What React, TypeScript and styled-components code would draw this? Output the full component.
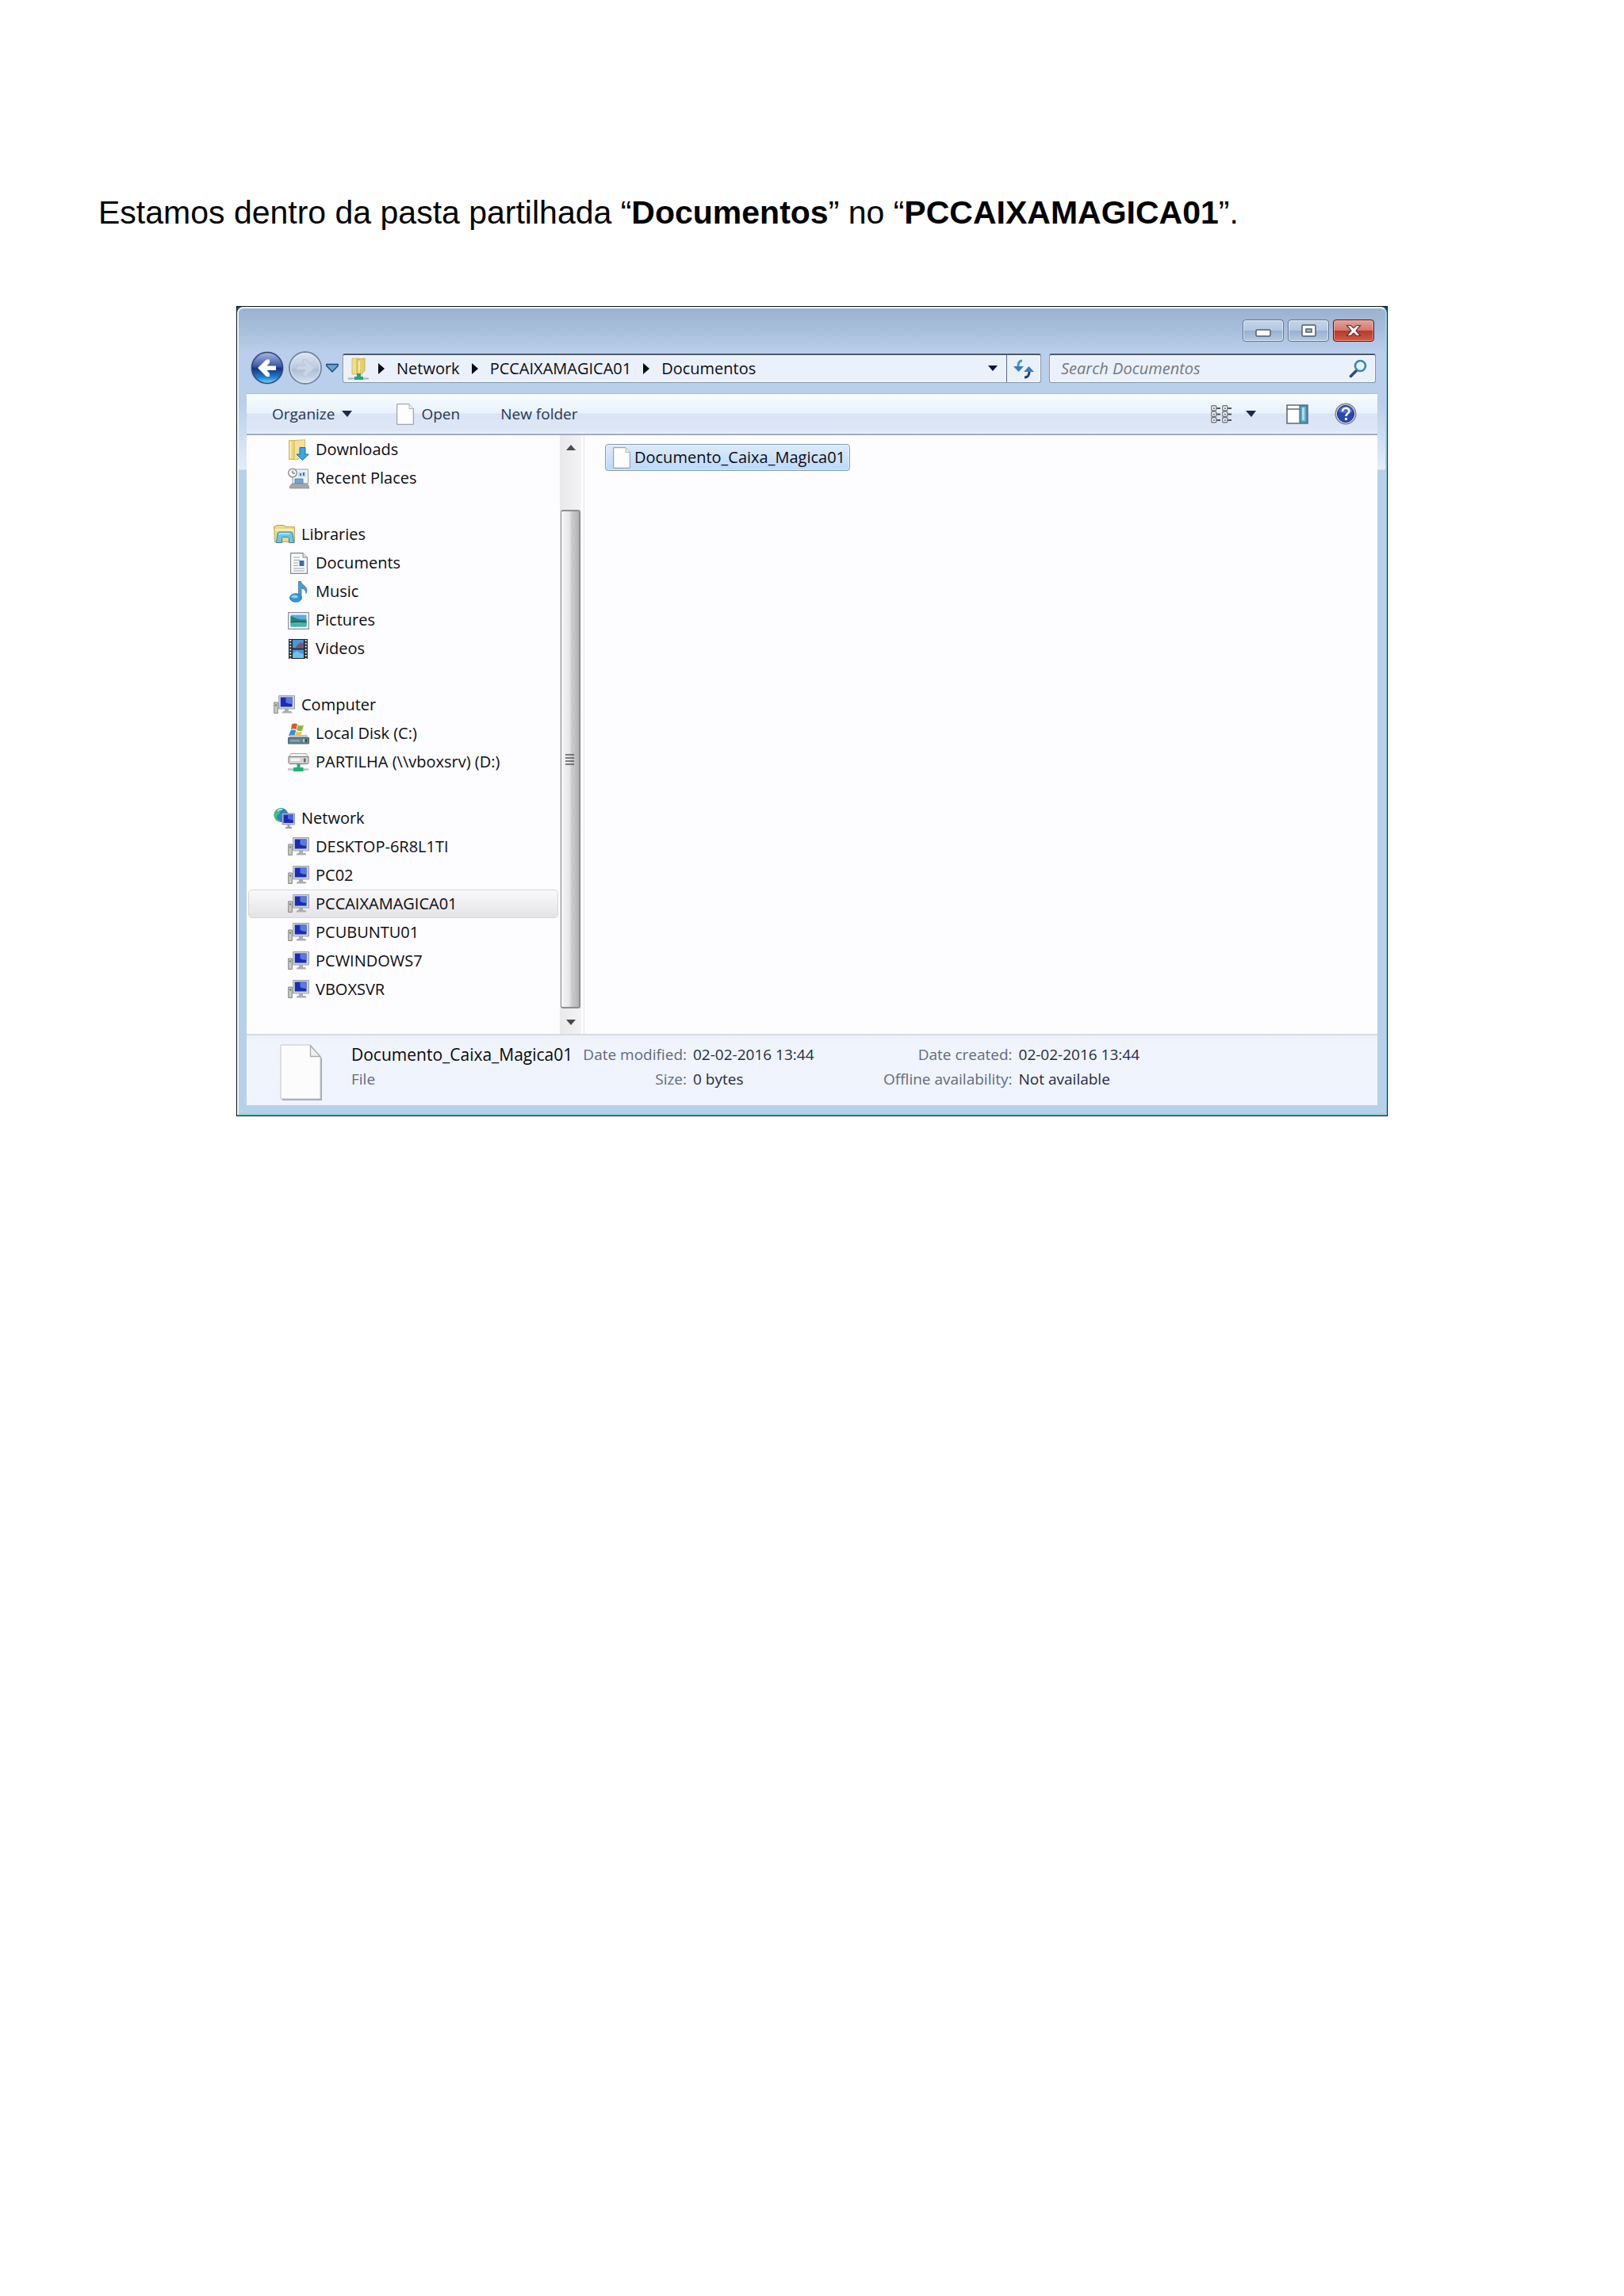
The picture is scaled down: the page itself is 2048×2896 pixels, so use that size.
import React from "react";
import styled, { createGlobalStyle } from "styled-components";

const GlobalStyle = createGlobalStyle`
  *, *::before, *::after { box-sizing: border-box; }
  body { margin: 0; background: #fff; }
  button, input { font: inherit; color: inherit; }
  button { margin: 0; padding: 0; border: 0; background: none; cursor: pointer; }
  ul, dl, dd, p { margin: 0; padding: 0; list-style: none; }
  a { color: inherit; text-decoration: none; }
  svg { display: block; flex: none; }
`;

/* ---------- document page ---------- */

const Page = styled.main`
  min-height: 100vh;
  padding: 244px 124px 124px;
  background: #fff;
`;

const Lead = styled.p`
  font: 41px/48px "Liberation Sans", Arial, sans-serif;
  color: #000;
`;

/* ---------- window chrome ---------- */

const Window = styled.section`
  max-width: 1452px;
  margin: 94px auto 0;
  border: 1px solid #0b1216;
  background: #0b4f92;
  font: 20px/28px "Open Sans", "Noto Sans", sans-serif;
  color: #0c0c14;
`;

const Frame = styled.div`
  padding: 0 0 11px;
  border: 2px solid;
  border-color: #fbfdff #9ad9f8 #7fc3c6 #f4f8fc;
  border-radius: 8px 8px 0 0;
  background: linear-gradient(
    #9ab2d0 0,
    #a3bad8 18px,
    #b9cfeb 56px,
    #b9cfeb 120px,
    #e2eefa 203px,
    #b8d1ea 204px
  );
`;

const Header = styled.header`
  padding: 14px 12px 10px 14px;
`;

const Caption = styled.div`
  display: flex;
  justify-content: flex-end;
  gap: 5px;
  padding-right: 2px;
  margin-bottom: 11px;
`;

const CaptionButton = styled.button<{ $close?: boolean }>`
  display: grid;
  place-items: center;
  width: 52px;
  height: 28px;
  border: 1px solid ${(p) => (p.$close ? "#4a1018" : "#5d7596")};
  border-radius: 4px;
  box-shadow: inset 0 0 0 1px
    ${(p) => (p.$close ? "rgba(255,200,190,.6)" : "rgba(255,255,255,.6)")};
  background: ${(p) =>
    p.$close
      ? "linear-gradient(#e3a398 0, #d27a6c 48%, #b8382a 50%, #cf5c46 100%)"
      : "linear-gradient(#c3d5ea 0, #b4c8e0 48%, #98b0cd 50%, #b3cae6 100%)"};
`;

const NavRow = styled.div`
  display: flex;
  align-items: center;
  height: 44px;
`;

const History = styled.div`
  display: flex;
  align-items: center;
  gap: 4px;
  margin-right: 5px;
`;

const BarBox = styled.div`
  display: flex;
  align-items: center;
  height: 37px;
  border: 1px solid #8496ad;
  border-top: 2px solid #4b5766;
  border-radius: 3px;
  background: #eaf1fa;
  box-shadow: inset 0 0 0 1px #f8fbfe;
`;

const Address = styled(BarBox)`
  flex: 1;
  min-width: 0;
  padding-left: 5px;
`;

const Crumbs = styled.nav`
  display: flex;
  flex: 1;
  align-items: center;
  gap: 15px;
  min-width: 0;
  padding-left: 12px;
  white-space: nowrap;
`;

const DropButton = styled.button`
  display: grid;
  place-items: center;
  width: 34px;
  height: 34px;
`;

const RefreshButton = styled(DropButton)`
  width: 43px;
  border-left: 1px solid #5b6878;
`;

const Search = styled(BarBox)`
  flex: 0 1 412px;
  margin-left: 10px;
  padding: 0 9px 0 14px;
`;

const SearchInput = styled.input`
  flex: 1;
  min-width: 0;
  padding: 0;
  border: 0;
  outline: 0;
  background: none;
  font-style: italic;

  &::placeholder { color: #74787f; opacity: 1; }
`;

/* ---------- client area ---------- */

const Client = styled.div`
  margin: 0 10px;
  background: #fdfcfe;
`;

const Toolbar = styled.div`
  display: flex;
  align-items: center;
  height: 53px;
  padding: 0 26px 0 32px;
  border-top: 1px solid #a9bdd4;
  border-bottom: 2px solid #9fadc4;
  background: linear-gradient(#f6fdff 0, #e9f1fc 48%, #dbe4f5 50%, #dde7f6 92%, #e8f1fb 100%);
  font-size: 19px;
  color: #28384f;
`;

const ToolButton = styled.button<{ $after: number }>`
  display: flex;
  align-items: center;
  gap: 9px;
  height: 34px;
  margin-right: ${(p) => p.$after}px;
  white-space: nowrap;
`;

const Spacer = styled.div`
  flex: 1;
`;

const Panes = styled.div`
  display: flex;
  height: 755px;
`;

const Tree = styled.nav`
  display: flex;
  flex: 0 0 395px;
  flex-direction: column;
  gap: 35px;
  padding: 0 2px;
`;

const Row = styled.a<{ $level: number; $selected?: boolean }>`
  display: flex;
  align-items: center;
  gap: 8px;
  height: 36px;
  padding-left: ${(p) => (p.$level ? 49 : 31)}px;
  border: 1px solid ${(p) => (p.$selected ? "#d6d5d9" : "transparent")};
  border-radius: 5px;
  background: ${(p) => (p.$selected ? "linear-gradient(#f9f8fa, #e4e3e6)" : "none")};
  white-space: nowrap;
`;

const ScrollBar = styled.div`
  display: flex;
  flex: 0 0 27px;
  flex-direction: column;
  background: linear-gradient(90deg, #e9e8ea, #f3f2f4);
`;

const ScrollButton = styled.button`
  display: grid;
  place-items: center;
  height: 30px;
`;

const ScrollTrack = styled.div`
  flex: 1;
  padding: 64px 1px 2px;
`;

const ScrollThumb = styled.div`
  display: grid;
  place-items: center;
  height: 100%;
  border: 2px solid #8d8d91;
  border-left-width: 1px;
  border-radius: 3px;
  background: linear-gradient(90deg, #f6f6f7 0, #e6e6e8 45%, #cbcbce 60%, #b3b3b7 100%);
`;

const FilePane = styled.div`
  flex: 1;
  min-width: 0;
  margin-left: 3px;
  padding: 11px 26px;
  border-left: 1px solid #dfe6f0;
`;

const FileItem = styled.button`
  display: flex;
  align-items: center;
  gap: 5px;
  height: 34px;
  padding: 0 5px 0 9px;
  border: 1px solid #8299b5;
  border-radius: 4px;
  box-shadow: inset 0 0 0 1px rgba(255, 255, 255, 0.45);
  background: linear-gradient(#dcebfb, #bcd9f8);
`;

const Details = styled.footer`
  display: flex;
  align-items: flex-start;
  height: 90px;
  padding: 9px 42px 0;
  border-top: 2px solid #d5dbe4;
  background: linear-gradient(#edf1f8 0, #f0f4fd 12px, #eff3fd 100%);
  font-size: 19px;
  line-height: 31px;
  color: #232c40;
  white-space: nowrap;

  > svg { margin-top: 2px; }
`;

const FileTitle = styled.div`
  flex: 0 0 291px;
  margin-left: 36px;

  strong { display: block; font-size: 21px; font-weight: 400; color: #08080e; }
  span { color: #606b80; }
`;

const Facts = styled.dl<{ $label: number }>`
  display: grid;
  grid-template-columns: ${(p) => p.$label}px auto;
  column-gap: 8px;
  margin-right: 76px;

  dt { text-align: right; color: #606b80; }
`;

/* ---------- icons ---------- */

const BackIcon = () => (
  <svg width="44" height="44" viewBox="0 0 44 44">
    <defs>
      <linearGradient id="back" x1="0" y1="0" x2="0" y2="1">
        <stop offset="0" stopColor="#a7b8e4" />
        <stop offset=".45" stopColor="#3c57a8" />
        <stop offset=".52" stopColor="#14347f" />
        <stop offset=".8" stopColor="#1f7fd0" />
        <stop offset="1" stopColor="#6fe0fb" />
      </linearGradient>
    </defs>
    <circle cx="22" cy="22" r="21" fill="#8ea5c4" opacity=".6" />
    <circle cx="22" cy="22" r="19.5" fill="url(#back)" stroke="#33476f" strokeWidth="1.5" />
    <path d="M10 22 21 11.500h4v4L21.500 19.500H33v5.500H21.500l3.500 4v4h-4z" fill="#fff" />
  </svg>
);

const ForwardIcon = () => (
  <svg width="44" height="44" viewBox="0 0 44 44">
    <defs>
      <linearGradient id="fwd" x1="0" y1="0" x2="0" y2="1">
        <stop offset="0" stopColor="#dde7f3" />
        <stop offset=".5" stopColor="#bccbdf" />
        <stop offset=".55" stopColor="#adbfd6" />
        <stop offset="1" stopColor="#d5e3f3" />
      </linearGradient>
    </defs>
    <circle cx="22" cy="22" r="20" fill="url(#fwd)" stroke="#7487a2" strokeWidth="2" />
    <circle cx="22" cy="22" r="18.500" fill="none" stroke="#e3edf8" strokeWidth="1" />
    <path d="M34 22 23 32.500h-4v-4l3.500-4H11V19h11.500L19 15.500v-4h4z" fill="#c9d6e6" stroke="#b2c2d6" strokeWidth=".8" />
  </svg>
);

const HistoryArrow = () => (
  <svg width="16" height="12" viewBox="0 0 16 12">
    <path d="M.8 1.500h14.400v2L8 11 .8 3.500z" fill="#6aa3d3" stroke="#1d4770" strokeWidth="1.300" />
  </svg>
);

const Triangle = ({ dir = "down", size = 12, color = "#1c2a40" }: { dir?: "down" | "up" | "right"; size?: number; color?: string }) => {
  const half = Math.round(size / 2);
  if (dir === "right")
    return (
      <svg width="8" height="14" viewBox="0 0 8 14">
        <path d="M0 0v14l8-7z" fill={color} />
      </svg>
    );
  return (
    <svg width={size} height={half + 1} viewBox={`0 0 ${size} ${half + 1}`}>
      <path d={dir === "down" ? `M0 0h${size}L${half} ${half + 1}z` : `M0 ${half + 1}h${size}L${half} 0z`} fill={color} />
    </svg>
  );
};

const SharedFolderIcon = () => (
  <svg width="27" height="30" viewBox="0 0 27 30">
    <path d="M6 2h9v20H6z" fill="#f1df8c" stroke="#cdb55c" strokeWidth=".8" />
    <path d="M12 3.500 22 2v15l-3 4-7 1z" fill="#e9cf6b" stroke="#bfa045" strokeWidth=".8" />
    <path d="M15 5.500v15.500" stroke="#fbf1bd" strokeWidth="1.500" />
    <path d="M1 27.500h26" stroke="#a9b6b9" strokeWidth="2" />
    <path d="M12 21h5v4h3v4H9v-4h3z" fill="#2aa572" />
  </svg>
);

const RefreshIcon = () => (
  <svg width="26" height="26" viewBox="0 0 26 26">
    <path d="M11 3C7 3 6 6 6 10" fill="none" stroke="#4b93c8" strokeWidth="3" />
    <path d="M0 10h13l-6.500 7z" fill="#3b7dbb" />
    <path d="M14 24c4 0 6-3 6-7" fill="none" stroke="#1f3f73" strokeWidth="3" />
    <path d="M13 17h13l-6.500-7z" fill="#3b7dbb" />
  </svg>
);

const SearchIcon = () => (
  <svg width="24" height="24" viewBox="0 0 24 24">
    <path d="M10.500 13.500 2.500 21.500" stroke="#334a73" strokeWidth="3.600" strokeLinecap="round" />
    <circle cx="14.500" cy="8.500" r="6.500" fill="#e2f3fb" stroke="#3f84b0" strokeWidth="2.600" />
  </svg>
);

const SheetIcon = ({ width = 22, height = 27 }: { width?: number; height?: number }) => (
  <svg width={width} height={height} viewBox="0 0 22 27">
    <path d="M.7.700H16L21.300 6.500v19.800H.7z" fill="#fdfdfe" stroke="#8f939b" strokeWidth="1" />
    <path d="M16 .7v5.800h5.300" fill="#eceef1" stroke="#a3a7ae" strokeWidth=".8" />
  </svg>
);

const BigSheetIcon = () => (
  <svg width="54" height="72" viewBox="0 0 54 72">
    <path d="M3 3h37l13 15v53H3z" fill="#a8a9ad" />
    <path d="M1 1h37.500L51 16v53H1z" fill="#fcfcfc" stroke="#c3c4c8" strokeWidth="1" />
    <path d="M38.500 2v13.500H51z" fill="#f1f1f3" stroke="#a9abb0" strokeWidth="1.300" />
  </svg>
);

const DownloadsIcon = () => (
  <svg width="27" height="27" viewBox="0 0 27 27">
    <path d="M1.500 1.500h11v24h-11z" fill="#ecd67c" stroke="#c4aa54" strokeWidth=".8" />
    <path d="M8 1.500 21.500.700V22L10 26l-2-1z" fill="#f3e294" stroke="#c9b05c" strokeWidth=".8" />
    <path d="M3.500 3v21" stroke="#fbf2c2" strokeWidth="1.500" />
    <path d="M15 10.500h7v8.500h4.300L18.500 26.500 11 19h4z" fill="#39a6e8" stroke="#1d67ad" strokeWidth="1" />
  </svg>
);

const RecentIcon = () => (
  <svg width="27" height="27" viewBox="0 0 27 27">
    <path d="M6 2h19.500v18H6z" fill="#eef2f5" stroke="#93a0aa" strokeWidth="1" />
    <path d="M13 5h10v7H13z" fill="#cfe2f2" />
    <path d="M15 7h2v3h-2zM19 6h2v4h-2z" fill="#3774b5" />
    <path d="M9 14h10v6H9z" fill="#6fa9d2" stroke="#54778f" strokeWidth=".8" />
    <path d="M5 20h19l3 3.500V26H2.500v-2.500z" fill="#a3a6a8" stroke="#7f8386" strokeWidth=".6" />
    <circle cx="6" cy="6.500" r="5.300" fill="#f5f6f7" stroke="#85898d" strokeWidth="1.300" />
    <path d="M6 3.500v3.500h3" fill="none" stroke="#555" strokeWidth="1" />
  </svg>
);

const LibrariesIcon = () => (
  <svg width="27" height="27" viewBox="0 0 27 27">
    <path d="M.6 3h2l1-1.500h10L15 3.500h11.400v19H1.500z" fill="#ecd983" stroke="#b79f4f" strokeWidth=".9" />
    <path d="M2 7.500h23.500" stroke="#fbf3c5" strokeWidth="2" />
    <path d="M5 13c0-2 1-3 3-3h13c2 0 3 1 3 3l2 10.500h-6.500V18c0-1-.5-1.500-1.500-1.500h-6c-1 0-1.500.5-1.500 1.500v5.500H3.500z" fill="#6fc4e4" stroke="#2f86aa" strokeWidth="1" />
    <path d="M7 13.500c0-1 .5-1.500 1.500-1.500h12" fill="none" stroke="#c5ecf8" strokeWidth="1.500" />
  </svg>
);

const DocumentsIcon = () => (
  <svg width="27" height="27" viewBox="0 0 27 27">
    <path d="M3.600.600h15.400l5.400 5.500v20.300H3.600z" fill="#fafbfc" stroke="#7f858d" strokeWidth="1.100" />
    <path d="M19 .6v5.500h5.400" fill="#e6e9ec" stroke="#7f858d" strokeWidth="1" />
    <path d="M7 6h8M7 9.500h8M7 13h6M7 16.500h6M7 20h14M7 23h14" stroke="#9aa1aa" strokeWidth="1.200" />
    <path d="M14.500 10h6v7h-6z" fill="#3b6fa5" />
  </svg>
);

const MusicIcon = () => (
  <svg width="27" height="27" viewBox="0 0 27 27">
    <path d="M13.500 0h3c.5 5 7.500 6 7.500 11.500 0 1.500-.5 3-1 4 0-4-3-6-6-6.500v11.500h-3.500z" fill="#4f9dd0" stroke="#3d6f95" strokeWidth=".7" />
    <ellipse cx="10" cy="21" rx="7.500" ry="5.300" fill="#2f97dd" stroke="#1c6aa8" strokeWidth=".8" />
    <ellipse cx="8.500" cy="19.500" rx="4" ry="2" fill="#8fd0f5" />
  </svg>
);

const PicturesIcon = () => (
  <svg width="27" height="27" viewBox="0 0 27 27">
    <path d="M.7 3.700h25.600v20.600H.7z" fill="#fbfbfb" stroke="#8c9093" strokeWidth="1.200" />
    <path d="M3.500 6.500h20v15h-20z" fill="#59aede" />
    <path d="M3.500 8c5 1.500 8 5 20 4.500V17h-20z" fill="#2c7f72" />
    <path d="M3.500 16h20v5.500h-20z" fill="#4ab3a8" />
    <path d="M3.500 16c7-1.500 14-1 20 0" stroke="#1b5962" strokeWidth="1.200" fill="none" />
  </svg>
);

const VideosIcon = () => (
  <svg width="27" height="27" viewBox="0 0 27 27">
    <path d="M1 1h24v25H1z" fill="#20252d" />
    <path d="M6 2h14v10.500H6zM6 14.500h14V25H6z" fill="#4598dc" />
    <path d="M12 9l4-4 2 2 2-3v8.500H9z" fill="#7b5272" />
    <path d="M6 20l5-4 5 3 4 1v5H6z" fill="#74bdf0" />
    <path d="M3.300 2v24M22.700 2v24" stroke="#e9ecef" strokeWidth="2" strokeDasharray="2 1.800" />
  </svg>
);

const ComputerIcon = () => (
  <svg width="27" height="27" viewBox="0 0 27 27">
    <path d="M.7 10h4.600v13.500H.7z" fill="#c8cac5" stroke="#83867f" strokeWidth="1" />
    <path d="M2 12.500h2v2H2z" fill="#5d8a4a" />
    <path d="M6.700 1.500h19.800v16.500H6.700z" fill="#d0d3da" stroke="#9aa0ab" strokeWidth="1" />
    <path d="M8.800 3.500h14.700v12H8.800z" fill="#1a2cb4" />
    <path d="M15.500 3.500h8v8.500c-3 0-6-1-8-2z" fill="#5a78e4" />
    <path d="M14 18h5v3h3l1.500 2.500H10.500L12 21h2z" fill="#a9acb0" />
  </svg>
);

const DiskIcon = () => (
  <svg width="27" height="27" viewBox="0 0 27 27">
    <path d="M5 1.500c2.500-1.500 5-1.300 7 0l-1.500 6.500c-2-1-4.500-1-6.500.5z" fill="#e0562a" />
    <path d="M12.800 2.500c2 1 4.500 1.300 7.200 0L18 9.500c-2.500 1-4.700.700-6.700-.5z" fill="#86b93c" />
    <path d="M3.500 9.500c2-1.500 4.500-1.300 6.700 0L8.500 16 1 16z" fill="#3a8ddb" />
    <path d="M11 10.500c2 1 4.500 1.300 7 .3L16 16.500H9z" fill="#f3c634" />
    <path d="M3 15h21l2.500 4H.5z" fill="#b9c4c9" />
    <path d="M.6 18.500h25.800v7.500H.6z" fill="#66828c" stroke="#48606a" strokeWidth="1" />
    <path d="M3 21h12v2.500H3z" fill="#86a6ae" />
    <path d="M19 20h2v4h-2z" fill="#8fe08a" />
    <path d="M22 20h2v4h-2z" fill="#3a4c54" />
  </svg>
);

const ShareDriveIcon = () => (
  <svg width="27" height="27" viewBox="0 0 27 27">
    <path d="M4 2.500h19L26 7H1z" fill="#f0f0f0" stroke="#9b9b9b" strokeWidth=".8" />
    <path d="M1 6.500h25v7.500c0 1-1 1.500-2 1.500H3c-1 0-2-.5-2-1.500z" fill="#d3d4d3" stroke="#727474" strokeWidth="1" />
    <path d="M3.500 8.500h12v3.500h-12z" fill="#f4f4f4" />
    <path d="M20 8.500h2.500v5H20z" fill="#646a68" />
    <path d="M0 22.500h26" stroke="#b5c4c0" strokeWidth="2.500" />
    <path d="M11.500 16h4v4h4v5H7v-5h4.500z" fill="#22b07a" />
  </svg>
);

const NetworkIcon = () => (
  <svg width="27" height="27" viewBox="0 0 27 27">
    <circle cx="9.500" cy="9" r="9" fill="#2f83c4" />
    <path d="M2 4.500C5 1 9 .500 12 1c-1 3-4 3-4 5S4 9 4 12s4 3 5 5.500C4 18 .5 13 .500 9z" fill="#45bd7d" />
    <path d="M5 4c2-2 4-2.500 6-2" stroke="#c9edf8" strokeWidth="1.500" fill="none" />
    <path d="M11 7h15.500v14H11z" fill="#c3c8d8" stroke="#8088a0" strokeWidth=".8" />
    <path d="M12.500 8.500h12.500v10.500H12.500z" fill="#1a2bb5" />
    <path d="M18 8.500h7v7c-3 0-5-1-7-2z" fill="#4a66dc" />
    <path d="M17.500 21h3v3h2.500v2h-8v-2h2.500z" fill="#98a0ae" />
  </svg>
);

const ViewIcon = () => (
  <svg width="27" height="23" viewBox="0 0 27 23">
    {[0, 14].map((x) =>
      [0, 7.5, 15].map((y) => (
        <g key={`${x}-${y}`} transform={`translate(${x} ${y})`}>
          <rect x=".8" y=".8" width="6" height="6" rx="1" fill="#fff" stroke="#747a84" strokeWidth="1.400" />
          <path d="M3 3.200h1.800v1.600H3z" fill="#3a4150" />
          <path d="M7.500 4h4.500" stroke="#3c4351" strokeWidth="1.800" />
        </g>
      ))
    )}
  </svg>
);

const PreviewPaneIcon = () => (
  <svg width="28" height="25" viewBox="0 0 28 25">
    <path d="M1 1h26v23H1z" fill="#fdfdfe" stroke="#5d6b7b" strokeWidth="1.600" />
    <path d="M1 6h16M17 1v23" stroke="#5d6b7b" strokeWidth="1.300" />
    <path d="M18 2h8v21h-8z" fill="#5fb1cd" stroke="#2f6b8b" strokeWidth="1" />
    <path d="M20 4h3v16h-3z" fill="#a9deea" />
  </svg>
);

const HelpIcon = () => (
  <svg width="28" height="28" viewBox="0 0 28 28">
    <circle cx="14" cy="14" r="12.800" fill="#d3d7e0" stroke="#7b8190" strokeWidth="1.400" />
    <circle cx="14" cy="14" r="10.500" fill="#2a45b4" stroke="#1c2f86" strokeWidth="1" />
    <path d="M5 11a9.500 9.500 0 0 1 18 0c-5 3-13 3-18 0z" fill="#6f88dc" opacity=".55" />
    <path d="M10 11c0-5.500 8.500-5.500 8.500-.5 0 3-4 3.200-4 6.500" fill="none" stroke="#fff" strokeWidth="2.600" />
    <circle cx="14.500" cy="20.500" r="1.700" fill="#fff" />
  </svg>
);

const MinimizeIcon = () => (
  <svg width="20" height="16" viewBox="0 0 20 16">
    <rect x="1" y="7" width="18" height="8" rx="1.500" fill="#fff" stroke="#505c6f" strokeWidth="1.500" />
  </svg>
);

const MaximizeIcon = () => (
  <svg width="19" height="16" viewBox="0 0 19 16">
    <rect x="1" y="1" width="17" height="14" rx="1.500" fill="#fff" stroke="#505c6f" strokeWidth="1.500" />
    <rect x="6" y="6" width="7" height="4" fill="#a9bcd4" stroke="#505c6f" strokeWidth="1.500" />
  </svg>
);

const CloseIcon = () => (
  <svg width="20" height="16" viewBox="0 0 20 16">
    <path d="M1.500 1.500h5L10 5l3.500-3.500h5L13 8l5.500 6.500h-5L10 11l-3.500 3.500h-5L7 8z" fill="#fff" stroke="#5b3438" strokeWidth="1.200" />
  </svg>
);

/* ---------- data ---------- */

type Entry = { label: string; icon: React.FC; level: 0 | 1; selected?: boolean };

const groups: Entry[][] = [
  [
    { label: "Downloads", icon: DownloadsIcon, level: 1 },
    { label: "Recent Places", icon: RecentIcon, level: 1 },
  ],
  [
    { label: "Libraries", icon: LibrariesIcon, level: 0 },
    { label: "Documents", icon: DocumentsIcon, level: 1 },
    { label: "Music", icon: MusicIcon, level: 1 },
    { label: "Pictures", icon: PicturesIcon, level: 1 },
    { label: "Videos", icon: VideosIcon, level: 1 },
  ],
  [
    { label: "Computer", icon: ComputerIcon, level: 0 },
    { label: "Local Disk (C:)", icon: DiskIcon, level: 1 },
    { label: "PARTILHA (\\\\vboxsrv) (D:)", icon: ShareDriveIcon, level: 1 },
  ],
  [
    { label: "Network", icon: NetworkIcon, level: 0 },
    { label: "DESKTOP-6R8L1TI", icon: ComputerIcon, level: 1 },
    { label: "PC02", icon: ComputerIcon, level: 1 },
    { label: "PCCAIXAMAGICA01", icon: ComputerIcon, level: 1, selected: true },
    { label: "PCUBUNTU01", icon: ComputerIcon, level: 1 },
    { label: "PCWINDOWS7", icon: ComputerIcon, level: 1 },
    { label: "VBOXSVR", icon: ComputerIcon, level: 1 },
  ],
];

const crumbs = ["Network", "PCCAIXAMAGICA01", "Documentos"];

export default function App() {
  return (
    <>
      <GlobalStyle />
      <Page>
        <Lead>
          Estamos dentro da pasta partilhada “<b>Documentos</b>” no “<b>PCCAIXAMAGICA01</b>”.
        </Lead>

        <Window>
          <Frame>
            <Header>
              <Caption>
                <CaptionButton aria-label="Minimize"><MinimizeIcon /></CaptionButton>
                <CaptionButton aria-label="Maximize"><MaximizeIcon /></CaptionButton>
                <CaptionButton $close aria-label="Close"><CloseIcon /></CaptionButton>
              </Caption>
              <NavRow>
                <History>
                  <button aria-label="Back"><BackIcon /></button>
                  <button aria-label="Forward"><ForwardIcon /></button>
                  <button aria-label="Recent pages"><HistoryArrow /></button>
                </History>
                <Address>
                  <SharedFolderIcon />
                  <Crumbs aria-label="Address">
                    {crumbs.map((name) => (
                      <React.Fragment key={name}>
                        <Triangle dir="right" color="#0a0a12" />
                        <a href="#">{name}</a>
                      </React.Fragment>
                    ))}
                  </Crumbs>
                  <DropButton aria-label="Previous locations"><Triangle color="#0b1540" /></DropButton>
                  <RefreshButton aria-label="Refresh"><RefreshIcon /></RefreshButton>
                </Address>
                <Search>
                  <SearchInput type="text" aria-label="Search Documentos" placeholder="Search Documentos" />
                  <SearchIcon />
                </Search>
              </NavRow>
            </Header>

            <Client>
              <Toolbar>
                <ToolButton $after={56}>Organize <Triangle size={13} /></ToolButton>
                <ToolButton $after={51}><SheetIcon />Open</ToolButton>
                <ToolButton $after={0}>New folder</ToolButton>
                <Spacer />
                <ToolButton $after={17} aria-label="Change your view"><ViewIcon /></ToolButton>
                <ToolButton $after={38} aria-label="More view options"><Triangle size={13} /></ToolButton>
                <ToolButton $after={33} aria-label="Show the preview pane"><PreviewPaneIcon /></ToolButton>
                <ToolButton $after={0} aria-label="Get help"><HelpIcon /></ToolButton>
              </Toolbar>

              <Panes>
                <Tree aria-label="Folders">
                  {groups.map((entries) => (
                    <ul key={entries[0].label}>
                      {entries.map(({ label, icon: Icon, level, selected }) => (
                        <li key={label}>
                          <Row href="#" $level={level} $selected={selected}>
                            <Icon />
                            {label}
                          </Row>
                        </li>
                      ))}
                    </ul>
                  ))}
                </Tree>
                <ScrollBar>
                  <ScrollButton aria-label="Scroll up"><Triangle dir="up" color="#4a4a4e" /></ScrollButton>
                  <ScrollTrack>
                    <ScrollThumb>
                      <svg width="12" height="14" viewBox="0 0 12 14">
                        <path d="M0 1h11M0 5h11M0 9h11M0 13h11" stroke="#56565c" strokeWidth="1.500" />
                      </svg>
                    </ScrollThumb>
                  </ScrollTrack>
                  <ScrollButton aria-label="Scroll down"><Triangle color="#4a4a4e" /></ScrollButton>
                </ScrollBar>
                <FilePane>
                  <FileItem>
                    <SheetIcon />
                    Documento_Caixa_Magica01
                  </FileItem>
                </FilePane>
              </Panes>

              <Details>
                <BigSheetIcon />
                <FileTitle>
                  <strong>Documento_Caixa_Magica01</strong>
                  <span>File</span>
                </FileTitle>
                <Facts $label={132}>
                  <dt>Date modified:</dt>
                  <dd>02-02-2016 13:44</dd>
                  <dt>Size:</dt>
                  <dd>0 bytes</dd>
                </Facts>
                <Facts $label={174}>
                  <dt>Date created:</dt>
                  <dd>02-02-2016 13:44</dd>
                  <dt>Offline availability:</dt>
                  <dd>Not available</dd>
                </Facts>
              </Details>
            </Client>
          </Frame>
        </Window>
      </Page>
    </>
  );
}
